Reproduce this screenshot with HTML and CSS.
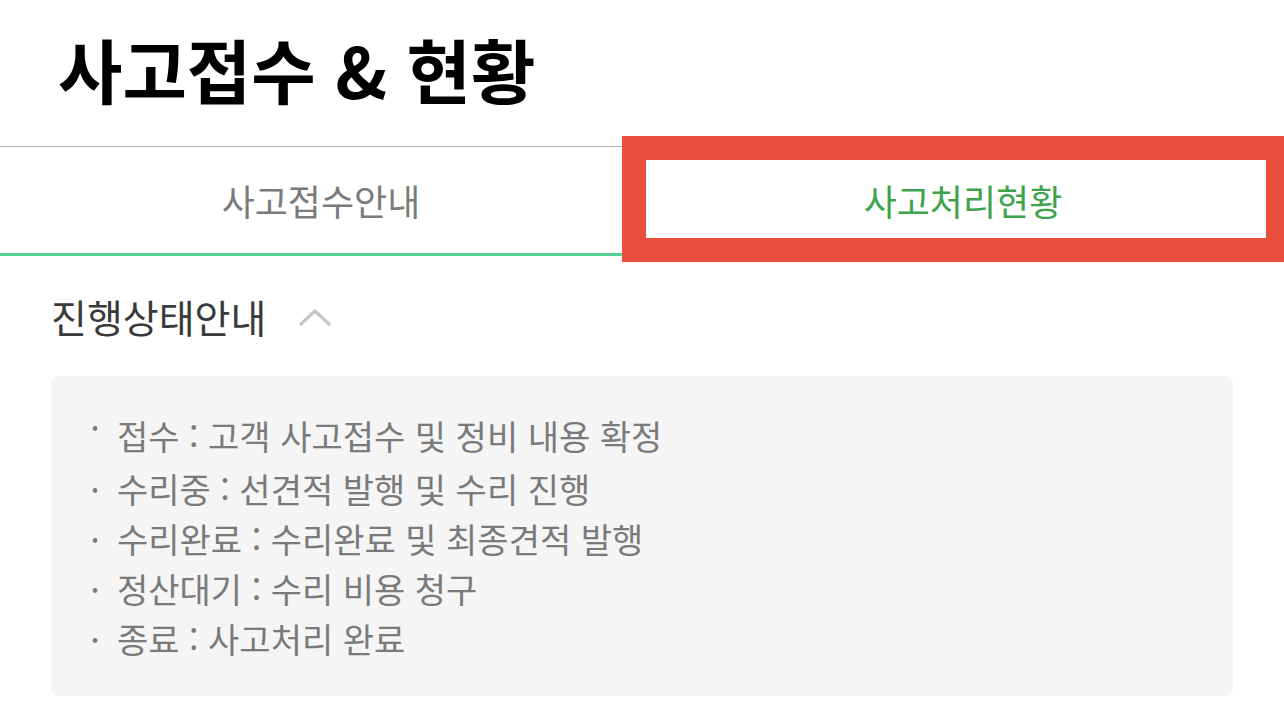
FILE: index.html
```html
<!DOCTYPE html>
<html lang="ko">
<head>
<meta charset="utf-8">
<title>사고접수 &amp; 현황</title>
<link rel="stylesheet" href="styles.css">
</head>
<body>
<h1 class="title">사고접수 &amp; 현황</h1>
<div class="tabs">
  <div class="tab">사고접수안내</div>
  <div class="tab tab-active">사고처리현황</div>
  <div class="highlight"></div>
</div>
<section class="status">
  <div class="status-head">
    <h2 class="status-title">진행상태안내</h2>
    <svg class="chevron" width="32" height="18" viewBox="0 0 32 18"><path d="M2 16 L16 3 L30 16" fill="none" stroke="#c6c6c6" stroke-width="3.2" stroke-linecap="round" stroke-linejoin="round"/></svg>
  </div>
  <ul class="status-list">
    <li class="first"><span class="dot dot-high">·</span><span>접수 : 고객 사고접수 및 정비 내용 확정</span></li>
    <li><span class="dot">·</span><span>수리중 : 선견적 발행 및 수리 진행</span></li>
    <li><span class="dot">·</span><span>수리완료 : 수리완료 및 최종견적 발행</span></li>
    <li><span class="dot">·</span><span>정산대기 : 수리 비용 청구</span></li>
    <li><span class="dot">·</span><span>종료 : 사고처리 완료</span></li>
  </ul>
</section>
</body>
</html>
```
FILE: styles.css
```css
html, body {
  margin: 0;
  padding: 0;
  background: #ffffff;
}
body {
  width: 1284px;
  height: 724px;
  overflow: hidden;
  font-family: "Noto Sans CJK KR", "Noto Sans", sans-serif;
  color: #333;
}
.title {
  margin: 0;
  height: 136px;
  padding-bottom: 10px;
  display: flex;
  align-items: center;
  padding-left: 58px;
  font-size: 70px;
  font-weight: 700;
  color: #000;
}
.tabs {
  position: relative;
  display: flex;
}
.tab {
  flex: 1;
  height: 106px;
  display: flex;
  align-items: center;
  justify-content: center;
  font-size: 36px;
  color: #7b7b7b;
  border-top: 1px solid #b3b3b3;
  border-bottom: 3px solid #52d192;
}
.tab-active {
  color: #3fa34d;
  border-top-color: #52d192;
  border-bottom-color: transparent;
}
.highlight {
  position: absolute;
  left: 622px;
  top: -10px;
  width: 620px;
  height: 78px;
  border: 24px solid #ea4f3d;
  border-right-width: 20px;
}
.status {
  padding: 0 51px;
}
.status-head {
  display: flex;
  align-items: center;
  gap: 33px;
  margin: 35px 0 35px 0;
  height: 50px;
}
.status-title {
  margin: 0;
  font-size: 39px;
  font-weight: 400;
  color: #3a3a3a;
  line-height: 50px;
}
.chevron {
  margin-top: 2px;
}
.status-list {
  list-style: none;
  margin: 0;
  padding: 35px 32px 33px;
  background: #f5f5f5;
  border-radius: 8px;
  height: 252px;
}
.status-list li {
  display: flex;
  font-size: 34px;
  line-height: 50px;
  color: #7a7a7a;
}
.status-list li.first {
  margin-bottom: 3px;
}
.dot {
  width: 24px;
  margin-right: 10px;
  text-align: center;
  flex: none;
}
.dot-high {
  position: relative;
  top: -9px;
}
```
